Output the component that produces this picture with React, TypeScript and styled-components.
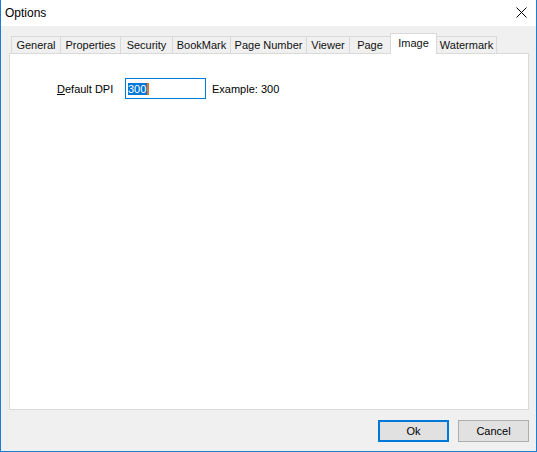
import React from "react";
import styled, { createGlobalStyle } from "styled-components";

const Global = createGlobalStyle`
  html, body { margin: 0; padding: 0; background: #ffffff; }
  body { font-family: "Liberation Sans", Arial, sans-serif; font-size: 11px; color: #000; }
  * { box-sizing: border-box; }
`;

const Window = styled.div`
  width: 537px;
  height: 452px;
  display: flex;
  flex-direction: column;
  border-left: 1px solid #1a7fd4;
  border-right: 1px solid #1a7fd4;
  border-bottom: 1px solid #1a7fd4;
  background: #f0f0f0;
`;

const TitleBar = styled.div`
  height: 26px;
  flex: 0 0 26px;
  background: #ffffff;
  display: flex;
  align-items: center;
  justify-content: space-between;
  padding: 0 9px 0 4px;
`;

const Title = styled.span`
  font-size: 12px;
  color: #000;
  margin-top: -1px;
`;

const CloseIcon = styled.svg`
  width: 11px;
  height: 11px;
  display: block;
  margin-top: -1px;
`;

const Body = styled.div`
  flex: 1;
  display: flex;
  flex-direction: column;
  padding: 7px 7px 0 8px;
`;

const TabStrip = styled.div`
  display: flex;
  align-items: flex-end;
  height: 20px;
  padding-left: 2px;
  position: relative;
  z-index: 1;
`;

const Tab = styled.div<{ $w: number; $active?: boolean }>`
  width: ${(p) => p.$w}px;
  height: ${(p) => (p.$active ? 21 : 17)}px;
  margin-left: -1px;
  margin-bottom: ${(p) => (p.$active ? -1 : 0)}px;
  border: 1px solid #d9d9d9;
  border-bottom: none;
  background: ${(p) => (p.$active ? "#ffffff" : "#f0f0f0")};
  display: flex;
  justify-content: center;
  align-items: ${(p) => (p.$active ? "flex-start" : "center")};
  padding-top: ${(p) => (p.$active ? 3 : 0)}px;
  font-size: 11px;
  color: #111;
  white-space: nowrap;
  position: relative;
  z-index: ${(p) => (p.$active ? 2 : 1)};
  &:first-child { margin-left: 0; }
`;

const Panel = styled.div`
  height: 357px;
  border: 1px solid #d9d9d9;
  background: #ffffff;
  padding: 24px 0 0 47px;
`;

const FieldRow = styled.div`
  display: flex;
  align-items: center;
  height: 21px;
`;

const Label = styled.label`
  width: 68px;
  font-size: 11px;
`;

const Underlined = styled.span`
  text-decoration: underline;
  text-underline-offset: 1px;
`;

const Input = styled.div`
  width: 81px;
  height: 21px;
  border: 1px solid #0078d7;
  display: flex;
  align-items: center;
  padding-left: 2px;
`;

const Selected = styled.span`
  background: #0078d7;
  color: #ffffff;
  font-size: 11px;
  line-height: 12px;
  height: 12px;
  padding: 0 1px 0 0;
`;

const Caret = styled.span`
  width: 2px;
  height: 12px;
  background: #e8741e;
`;

const Hint = styled.span`
  margin-left: 6px;
  font-size: 11px;
`;

const Footer = styled.div`
  height: 41px;
  display: flex;
  justify-content: flex-end;
  align-items: flex-start;
  gap: 9px;
  padding: 10px 0 0 0;
`;

const Button = styled.button<{ $default?: boolean }>`
  width: 71px;
  height: 22px;
  background: #e1e1e1;
  border: ${(p) => (p.$default ? "2px solid #0078d7" : "1px solid #adadad")};
  font-family: "Liberation Sans", Arial, sans-serif;
  font-size: 11px;
  color: #000;
  padding: 0;
  display: flex;
  align-items: center;
  justify-content: center;
`;

const tabs: { label: string; w: number; active?: boolean }[] = [
  { label: "General", w: 50 },
  { label: "Properties", w: 61 },
  { label: "Security", w: 53 },
  { label: "BookMark", w: 59 },
  { label: "Page Number", w: 77 },
  { label: "Viewer", w: 44 },
  { label: "Page", w: 42 },
  { label: "Image", w: 47, active: true },
  { label: "Watermark", w: 61 },
];

export default function App() {
  return (
    <>
      <Global />
      <Window>
        <TitleBar>
          <Title>Options</Title>
          <CloseIcon viewBox="0 0 11 11">
            <path d="M0.5 0.5 L10.5 10.5 M10.5 0.5 L0.5 10.5" stroke="#000" strokeWidth="1" fill="none" />
          </CloseIcon>
        </TitleBar>
        <Body>
          <TabStrip>
            {tabs.map((t) => (
              <Tab key={t.label} $w={t.w} $active={t.active}>
                {t.label}
              </Tab>
            ))}
          </TabStrip>
          <Panel>
            <FieldRow>
              <Label>
                <Underlined>D</Underlined>efault DPI
              </Label>
              <Input>
                <Selected>300</Selected>
                <Caret />
              </Input>
              <Hint>Example: 300</Hint>
            </FieldRow>
          </Panel>
          <Footer>
            <Button $default>Ok</Button>
            <Button>Cancel</Button>
          </Footer>
        </Body>
      </Window>
    </>
  );
}
